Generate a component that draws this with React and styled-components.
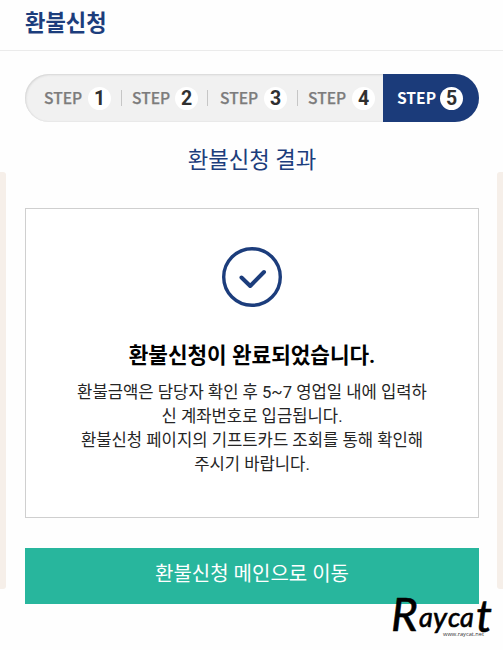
import React from "react";
import styled, { createGlobalStyle } from "styled-components";

const GlobalStyle = createGlobalStyle`
  * {
    box-sizing: border-box;
  }

  body {
    margin: 0;
    background: #fefefe;
    font-family: Roboto, "Noto Sans CJK KR", sans-serif;
    overflow: hidden;
  }
`;

const Page = styled.div`
  position: relative;
  width: 503px;
  height: 650px;
  background: #fefefe;
`;

const Header = styled.header`
  height: 51px;
  padding: 8px 25px 0;
  border-bottom: 1px solid #ebebeb;
`;

const Title = styled.h1`
  margin: 0;
  color: #1c3d7c;
  font-size: 22.2px;
  font-weight: 700;
  line-height: 30px;
`;

const Layout = styled.div`
  display: grid;
  grid-template-columns: 6px 1fr 6px;
`;

const SideStrip = styled.div`
  height: 417px;
  margin-top: 121px;
  background: #f6efe9;
  border-radius: ${(props) => (props.$right ? "3px 0 0 3px" : "0 3px 3px 0")};
`;

const Content = styled.main`
  padding: 23px 18px 0 19px;
`;

const Steps = styled.ol`
  display: grid;
  grid-template-columns: 97px 86px 90px 85px 96px;
  width: 454px;
  height: 48px;
  margin: 0;
  padding: 0;
  list-style: none;
  border-radius: 24px;
  overflow: hidden;
  background: #f1f1f1;
  box-shadow: inset 1px 1px 2px #d5d5d5, inset 0 -1px 1px #e9e9e9;
`;

const Step = styled.li`
  display: flex;
  align-items: center;
  gap: ${(props) => props.$gap}px;
  padding-left: ${(props) => props.$start}px;
  color: ${(props) => (props.$active ? "#fff" : "#7c7c7c")};
  background: ${(props) => (props.$active ? "#1b3b7a" : "transparent")};
  font-family: "Noto Sans CJK KR", sans-serif;
  font-size: 15.6px;
  font-weight: ${(props) => (props.$active ? 700 : 500)};
  -webkit-text-stroke: ${(props) => (props.$active ? "0" : "0.25px #7c7c7c")};
  line-height: 20px;
`;

const StepLabel = styled.span`
  width: 38px;
  padding-bottom: 2px;
  white-space: nowrap;
`;

const StepNumber = styled.span`
  width: 23px;
  height: 23px;
  border-radius: 50%;
  background: #fff;
  color: #303030;
  font-family: Roboto, sans-serif;
  font-size: 19.5px;
  font-weight: 700;
  line-height: 23px;
  text-align: center;
  -webkit-text-stroke: 0;
`;

const Divider = styled.span`
  width: 1px;
  height: 16px;
  margin-left: auto;
  background: #c6c6c6;
`;

const Subtitle = styled.h2`
  margin: 22px 0 0;
  color: #1c3d7c;
  font-size: 22.3px;
  font-weight: 400;
  line-height: 32px;
  text-align: center;
`;

const ResultBox = styled.section`
  display: flex;
  flex-direction: column;
  align-items: center;
  width: 454px;
  height: 310px;
  margin-top: 32px;
  padding-top: 38px;
  border: 1px solid #cfcfcf;
  background: #fff;
`;

const ResultTitle = styled.h3`
  margin: 33px 0 0;
  color: #000;
  font-size: 21.3px;
  font-weight: 700;
  line-height: 32px;
`;

const ResultText = styled.p`
  margin: 9px 0 0;
  color: #252525;
  font-size: 16.65px;
  line-height: 24px;
  text-align: center;
  white-space: nowrap;
`;

const MainButton = styled.button`
  display: block;
  width: 454px;
  height: 56px;
  margin-top: 30px;
  padding: 0 0 7px;
  border: 0;
  background: #28b69d;
  color: #fff;
  font-family: inherit;
  font-size: 20px;
  font-weight: 400;
`;

const Signature = styled.div`
  position: absolute;
  left: 385px;
  top: 590px;
  width: 118px;
  height: 60px;

  svg {
    display: block;
    overflow: visible;
  }
`;

const steps = [
  { number: 1, start: 19, gap: 6 },
  { number: 2, start: 10, gap: 5 },
  { number: 3, start: 12, gap: 6 },
  { number: 4, start: 10, gap: 6 },
  { number: 5, start: 14, gap: 5 },
];

const CheckIcon = () => (
  <svg width="60" height="60" viewBox="0 0 60 60" fill="none" stroke="#1c3d7c">
    <circle cx="30" cy="30" r="28.3" strokeWidth="3.4" />
    <path
      d="M19.5 30.5 L28.2 39 L42 25"
      strokeWidth="4"
      strokeLinecap="round"
      strokeLinejoin="round"
    />
  </svg>
);

const RaycatLogo = () => (
  <Signature>
    <svg width="118" height="60" viewBox="0 0 118 60">
      <text
        y="38"
        fontFamily="Lato, sans-serif"
        fontStyle="italic"
        fontWeight="400"
        fill="#000"
        stroke="#000"
        strokeWidth="0.6"
      >
        <tspan x="6" y="41" fontSize="46">R</tspan>
        <tspan x="34" y="37" fontSize="27">a</tspan>
        <tspan x="48" y="38" fontSize="29">y</tspan>
        <tspan x="63" y="37" fontSize="27">c</tspan>
        <tspan x="75" y="37" fontSize="27">a</tspan>
        <tspan x="91" y="42" fontSize="45">t</tspan>
      </text>
      <text
        x="58"
        y="45.5"
        fontFamily="Open Sans, sans-serif"
        fontSize="6"
        fill="#333"
        textLength="41"
        lengthAdjust="spacingAndGlyphs"
      >
        www.raycat.net
      </text>
    </svg>
  </Signature>
);

const App = () => {
  return (
    <Page>
      <GlobalStyle />
      <Header>
        <Title>환불신청</Title>
      </Header>
      <Layout>
        <SideStrip />
        <Content>
          <Steps>
            {steps.map((step) => (
              <Step
                key={step.number}
                $start={step.start}
                $gap={step.gap}
                $active={step.number === 5}
              >
                <StepLabel>STEP</StepLabel>
                <StepNumber>{step.number}</StepNumber>
                {step.number < 4 && <Divider />}
              </Step>
            ))}
          </Steps>
          <Subtitle>환불신청 결과</Subtitle>
          <ResultBox>
            <CheckIcon />
            <ResultTitle>환불신청이 완료되었습니다.</ResultTitle>
            <ResultText>
              환불금액은 담당자 확인 후 5~7 영업일 내에 입력하
              <br />
              신 계좌번호로 입금됩니다.
              <br />
              환불신청 페이지의 기프트카드 조회를 통해 확인해
              <br />
              주시기 바랍니다.
            </ResultText>
          </ResultBox>
          <MainButton type="button">환불신청 메인으로 이동</MainButton>
        </Content>
        <SideStrip $right />
      </Layout>
      <RaycatLogo />
    </Page>
  );
};

export default App;
